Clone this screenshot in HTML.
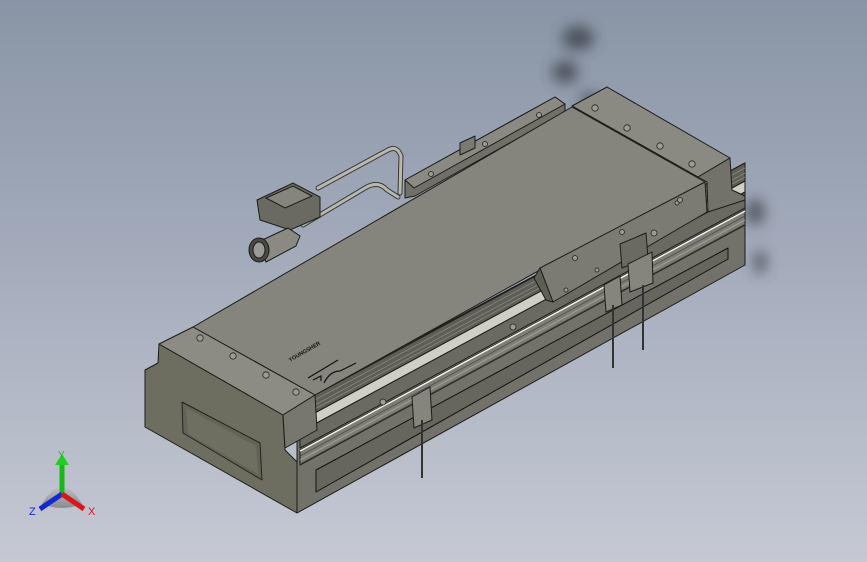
<!DOCTYPE html>
<html><head><meta charset="utf-8"><style>
html,body{margin:0;padding:0;width:867px;height:562px;overflow:hidden}
body{background:linear-gradient(180deg,#8995a6 0%,#a3abbb 45%,#c6c9d4 100%);font-family:"Liberation Sans","Noto Sans CJK SC",sans-serif}
</style></head><body>
<svg width="867" height="562" viewBox="0 0 867 562" xmlns="http://www.w3.org/2000/svg">
<defs>
<filter id="bl"><feGaussianBlur stdDeviation="7"/></filter>
<linearGradient id="ax" x1="0" y1="0" x2="0" y2="1"><stop offset="0" stop-color="#bbb"/><stop offset="1" stop-color="#666"/></linearGradient>
</defs>
<g filter="url(#bl)" fill="#3a3f48" opacity="0.8">
<ellipse cx="578" cy="38" rx="16" ry="12"/>
<ellipse cx="565" cy="72" rx="13" ry="11"/>
<ellipse cx="590" cy="100" rx="10" ry="7"/>
<ellipse cx="755" cy="212" rx="9" ry="13"/>
<ellipse cx="760" cy="262" rx="6" ry="12"/>
</g>
<g stroke="#1c1c1a" stroke-width="1" stroke-linejoin="round">
<!-- back rail strip -->
<polygon points="405,180 555,97 565,104 565,112 415,196 405,198" fill="#707068"/>
<polygon points="405,180 555,97 565,104 414,188" fill="#8a8a82"/>
<polygon points="460,143 475,136 475,148 460,155" fill="#7a7a72"/>
<!-- front face body -->
<polygon points="297,403 745,163 745,265 297,513" fill="#72726a"/>
<!-- upper rail (dark grooves) -->
<polygon points="300,403 745,163 745,181 300,421" fill="#5e5e56"/>
<line x1="300" y1="408" x2="745" y2="168" stroke="#8a8a82" stroke-width="0.8"/>
<line x1="300" y1="413" x2="745" y2="173" stroke="#8a8a82" stroke-width="0.8"/>
<line x1="300" y1="417" x2="745" y2="177" stroke="#8a8a82" stroke-width="0.8"/>
<!-- light strip -->
<polygon points="300,421 745,181 745,192 300,432" fill="#cfcfc6"/>
<polygon points="300,432 745,192 745,208 300,448" fill="#6a6a61"/>
<!-- lower rail -->
<polygon points="300,450 745,210 745,225 300,465" fill="#7e7e76"/>
<line x1="300" y1="451" x2="745" y2="211" stroke="#f2f2ea" stroke-width="1.5"/>
<line x1="300" y1="456" x2="745" y2="216" stroke="#4c4c46" stroke-width="0.8"/>
<line x1="300" y1="460" x2="745" y2="220" stroke="#a8a8a0" stroke-width="0.8"/>
<line x1="300" y1="464" x2="745" y2="224" stroke="#4c4c46" stroke-width="0.8"/>
<!-- lower recess -->
<polygon points="316,470 728,248 728,259 316,492" fill="#66665c" stroke="#111"/>
<!-- main top face -->
<polygon points="193,327 572,107 705,182 540,270 315,395" fill="#85857d"/>
<!-- right end block -->
<polygon points="572,106 607,87 730,158 698,177" fill="#8a8a82"/>
<line x1="572" y1="106" x2="698" y2="177"/>
<polygon points="698,177 730,158 732,190 745,196 745,200 708,212 707,182" fill="#727269"/>
<!-- carriage front -->
<polygon points="540,268 705,182 707,212 553,302" fill="#7b7b72"/>
<polygon points="540,268 553,302 546,300 534,278" fill="#5e5e56"/>
<!-- left end face -->
<polygon points="159,344 283,415 285,450 297,462 297,513 145,427 145,370 158,363" fill="#6e6e60"/>
<polygon points="182,402 260,443 262,480 183,433" fill="#636356" stroke="#222"/>
<polygon points="186,408 256,446 258,474 188,434" fill="#6e6e61" stroke="none"/>
<!-- end cap top -->
<polygon points="159,344 193,327 315,395 283,415" fill="#8c8c84"/>
<polygon points="283,415 315,395 317,430 285,448" fill="#77776d"/>
<!-- carriage small bracket -->
<polygon points="620,244 646,233 648,258 622,268" fill="#6a6a60"/>
</g>
<!-- holes -->
<g fill="#9c9c95" stroke="#222" stroke-width="0.8">
<circle cx="200" cy="338" r="3.2"/><circle cx="233" cy="356" r="3.2"/><circle cx="266" cy="375" r="3.2"/><circle cx="296" cy="392" r="3.2"/>
<circle cx="595" cy="108" r="3.2"/><circle cx="627" cy="128" r="3.2"/><circle cx="660" cy="146" r="3.2"/><circle cx="692" cy="164" r="3.2"/>
<circle cx="539" cy="115" r="2.5"/><circle cx="485" cy="144" r="2.5"/><circle cx="431" cy="174" r="2.5"/>
<circle cx="566" cy="290" r="2"/><circle cx="597" cy="270" r="2"/><circle cx="677" cy="203" r="2"/><circle cx="654" cy="233" r="3"/>
<circle cx="575" cy="258" r="2.5"/><circle cx="622" cy="232" r="2.5"/><circle cx="680" cy="200" r="2.5"/>
<circle cx="383" cy="402" r="3"/><circle cx="513" cy="327" r="3"/>
</g>
<!-- logo -->
<text x="0" y="0" transform="translate(290,362) rotate(-30)" font-size="5.5" font-weight="bold" fill="#111">YOUNGSHER</text>
<path d="M308,378 l30,-18 M313,380 l8,-4 l0,5 M324,383 q6,-12 16,-12 l16,-8" stroke="#111" fill="none" stroke-width="1.2"/>
<!-- cables -->
<g fill="none" stroke="#3a3a36" stroke-width="5" stroke-linecap="round">
<path d="M318,188 L388,150 Q397,145 401,156 L400,193"/>
<path d="M303,225 L365,188 Q378,180 387,190 L398,197"/>
</g>
<g fill="none" stroke="#b8b8b0" stroke-width="3" stroke-linecap="round">
<path d="M318,188 L388,150 Q397,145 401,156 L400,193"/>
<path d="M303,225 L365,188 Q378,180 387,190 L398,197"/>
</g>
<!-- connector -->
<g stroke="#1c1c1a" stroke-width="1">
<polygon points="257,200 293,183 320,197 320,217 290,230 260,220" fill="#6a6a62"/>
<polygon points="266,198 293,186 312,196 285,208" fill="#85857d"/>
<polygon points="258,242 288,228 300,236 296,246 266,262" fill="#8a8a82"/>
<ellipse cx="259" cy="250" rx="10" ry="12" fill="#4a4a44"/>
<ellipse cx="259" cy="250" rx="6" ry="8" fill="#999"/>
</g>
<!-- sensors -->
<g stroke="#1c1c1a" stroke-width="1" fill="#85857d">
<polygon points="412,397 430,387 432,420 414,428"/>
<polygon points="604,285 620,276 622,305 606,312"/>
<polygon points="628,264 652,252 653,283 630,292"/>
</g>
<g stroke="#333" stroke-width="2">
<line x1="422" y1="420" x2="422" y2="478"/>
<line x1="613" y1="305" x2="613" y2="368"/>
<line x1="643" y1="285" x2="643" y2="350"/>
</g>
<!-- triad -->
<path d="M42,504 Q62,470 82,504 Q62,512 42,504Z" fill="url(#ax)" opacity="0.6"/>
<line x1="62" y1="494" x2="62" y2="462" stroke="#18b818" stroke-width="5"/>
<polygon points="55,465 62,454 69,465" fill="#20d020"/>
<line x1="62" y1="494" x2="40" y2="509" stroke="#1428d0" stroke-width="5"/>
<line x1="62" y1="494" x2="84" y2="509" stroke="#d81818" stroke-width="5"/>
<text x="58" y="458" font-size="10" fill="#14c014">Y</text>
<text x="29" y="515" font-size="11" fill="#1428d0">Z</text>
<text x="88" y="515" font-size="11" fill="#d81818">X</text>
</svg>
</body></html>
